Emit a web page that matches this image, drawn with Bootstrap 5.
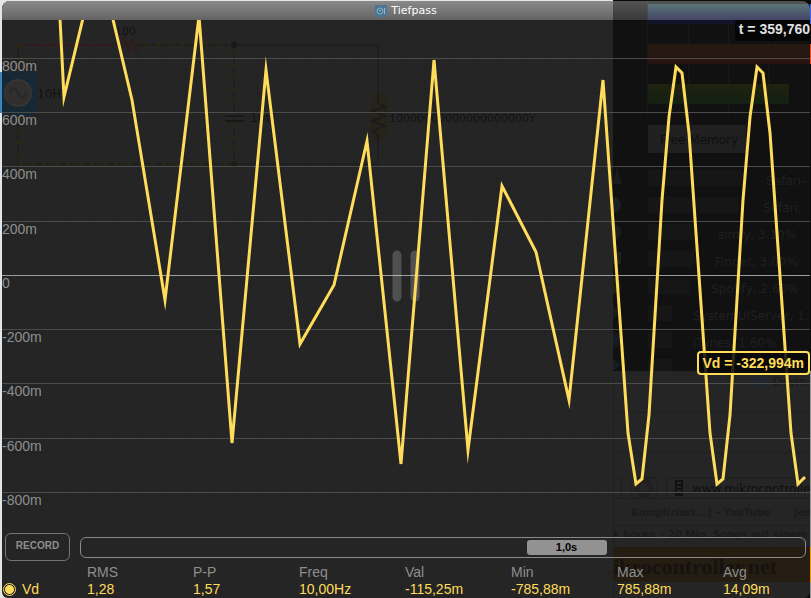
<!DOCTYPE html>
<html lang="de">
<head>
<meta charset="utf-8">
<meta name="viewport" content="width=device-width, initial-scale=1">
<title>Tiefpass</title>
<link href="https://cdn.jsdelivr.net/npm/bootstrap@5.3.0/dist/css/bootstrap.min.css" rel="stylesheet">
<style>
  :root { --trace: #ffdc5a; --muted: #8e8e8e; --line: #4b4b4b; }
  html, body { height: 100%; }
  body { background: #1c1c1c; font-family: "Liberation Sans", Arial, sans-serif; font-size: 14px; line-height: 17px; color: var(--muted); }
  .desktop { min-height: 100vh; padding: 1px 1px 0 2px; background: linear-gradient(#3a86bc, #3a86bc) 0 72px / 2px 41px no-repeat, linear-gradient(90deg, #e4e6e6 0 613px, #0a0a0a 613px); }
  .scope { background: #252525; border-radius: 8px 8px 6px 6px; }
  .backdrop { position: absolute; inset: 0; width: 100%; height: 100%; }
  .edge { position: absolute; top: 0; right: 0; width: 1px; height: 100%; }
  .titlebar { height: 19px; background: linear-gradient(rgba(255,255,255,.28), rgba(255,255,255,.17)); font: 11px/20px "DejaVu Sans", sans-serif; color: #fff; }
  .title-icon { width: 12px; height: 12px; }
  .plot { min-height: 200px; }
  .gridrows { display: grid; grid-template-rows: 35fr repeat(8, 50fr) 36fr; min-height: 100%; line-height: 14px; }
  .gridrows > div + div { border-top: 1px solid var(--line); }
  .gridrows > .zero { border-color: #9a9e9a !important; }
  .trace { position: absolute; inset: 0; width: 100%; height: 100%; }
  .pause { position: absolute; left: 50%; top: 50%; transform: translate(-50%, -50%); background: none; border: 0; padding: 0; line-height: 0; }
  .time-tag { position: absolute; top: 0; right: 0; background: #050505; color: #e0e0e0; border-radius: 4px 0 0 4px; padding: 1px 0 3px 4px; }
  .value-tag { position: absolute; top: 331px; right: 0; background: rgba(8,8,8,.85); color: var(--trace); border: 2px solid var(--trace); border-radius: 4px; padding: 2px 4px 1px 3px; }
  .controls { padding: 2px 4px 3px 3px; gap: 10px; }
  .record { width: 65px; height: 28px; border: 1px solid #747474; border-radius: 6px; background: none; color: var(--muted); font-size: 10px; font-weight: 700; line-height: 24px; padding: 0 0 2px; }
  .timebase { height: 21px; border: 1px solid #8a8a8a; border-radius: 6px; padding: 2px; }
  .timebase-thumb { margin-left: 61.6%; width: 80px; height: 15px; border: 0; border-radius: 3px; background: #929292; color: #000; font-size: 11px; font-weight: 700; line-height: 15px; }
  .readout { table-layout: fixed; }
  .readout th, .readout td { padding: 0; font-weight: 400; white-space: nowrap; }
  .readout td { color: var(--trace); }
  .c-name { width: 85px; }
  .c-val { width: 106px; }
  .channel { appearance: none; width: 13px; height: 13px; margin: 0 6px 0 1px; border: 1px solid var(--trace); border-radius: 50%; background: radial-gradient(circle, var(--trace) 0 4px, transparent 5px); }
</style>
<script src="https://cdn.jsdelivr.net/npm/bootstrap@5.3.0/dist/js/bootstrap.bundle.min.js"></script>
</head>
<body>
<div class="desktop d-flex position-relative">
  <svg class="edge" viewBox="0 0 1 598" preserveAspectRatio="none" aria-hidden="true">
    <path d="M0 4h1v20H0z" fill="#3868f0"/><path d="M0 44h1v20H0z" fill="#e84a10"/><path d="M0 371h1v227H0z" fill="#999"/><path d="M0 547h1v35H0z" fill="#f0a000"/>
  </svg>
  <main class="scope flex-grow-1 d-flex flex-column position-relative overflow-hidden">
    <svg class="backdrop" viewBox="2 1 808 597" preserveAspectRatio="xMinYMin slice" aria-hidden="true" font-family="DejaVu Sans, sans-serif" font-size="12">
      <defs>
        <pattern id="cells" width="24" height="24" patternUnits="userSpaceOnUse" x="17" y="20"><path d="M.5 0v24M0 .5h24" stroke="#222" fill="none"/></pattern>
        <linearGradient id="bar" x2="0" y2="1"><stop stop-color="#5c5c5c"/><stop offset="1" stop-color="#444"/></linearGradient>
        <linearGradient id="red" x2="0" y2="1"><stop stop-color="#251a12"/><stop offset="1" stop-color="#291311"/></linearGradient>
        <linearGradient id="green" x2="0" y2="1"><stop stop-color="#21220f"/><stop offset="1" stop-color="#122013"/></linearGradient>
        <linearGradient id="blue" x2="0" y2="1"><stop stop-color="#214349"/><stop offset="1" stop-color="#1e1e48"/></linearGradient>
      </defs>
      <path fill="url(#cells)" d="M2 20h611v578H2z"/>
      <path fill="url(#bar)" d="M2 1h611v19H2z"/>
      <g fill="none" stroke="#1f1f1f" stroke-width="2">
        <path d="M18 45v119h216V45H138M234 45h144v49M378 140v24H234" />
        <path d="M18 45h97l2-5 4 10 4-12 4 12 4-12 3 12 2-5" stroke="#301c1c"/>
        <path d="M18 45v119h216V45H138" stroke="#292910" stroke-width="3" stroke-dasharray="3 9"/>
        <path d="M225 116h19M225 121h19" stroke="#181818"/>
      </g>
      <rect x="371" y="93" width="16" height="48" rx="7" fill="#272319"/>
      <path d="M378 94v9l7 4-13 4 13 5-13 5 13 5-13 5 6 4v7" stroke="#1b1b1b" stroke-width="2" fill="none"/>
      <circle cx="234" cy="45" r="3" fill="#181818"/><circle cx="234" cy="164" r="3" fill="#1b1b1b"/>
      <rect x="0" y="71" width="37" height="45" rx="5" fill="#172733"/>
      <circle cx="18" cy="93" r="13" fill="#302f2d" stroke="#353535" stroke-width="2"/>
      <path d="M10 93q4-9 8 0t8 0" fill="none" stroke="#272727" stroke-width="2"/>
      <g fill="#131313">
        <text x="115" y="35" font-size="11">100</text><text x="37" y="98">10Hz</text><text x="250" y="122">1mF</text>
        <text x="389" y="122" font-size="11">10000000000000000000Y</text>
      </g>
      <path fill="#111" d="M613 1h198v370H613z"/>
      <path d="M647.500 1v115M688.500 1v115M728.500 1v115M768.500 1v115" stroke="#191919"/>
      <path fill="url(#blue)" d="M648 4h163v16H648z"/><path fill="#12142a" d="M648 20h163v4H648z"/><path fill="url(#red)" d="M648 44h163v20H648z"/>
      <rect x="648" y="84" width="141" height="20" rx="2" fill="url(#green)"/>
      <path d="M648 125h98v28H648z" fill="#202020"/>
      <text x="660" y="144" fill="#0f0f0f">Free Memory</text>
      <g fill="#161616"><path d="M648 170h95v16h-95zM648 197h90v16h-90zM648 224h46v16h-46zM648 251h46v16h-46zM648 278h42v16h-42zM648 305h24v16h-24zM648 332h24v16h-24zM648 359h24v12h-24z"/></g>
      <g fill="#202020">
        <text x="766" y="185">Safari–</text><text x="763" y="212">Safari,</text><text x="718" y="239">simfy, 3.10%</text><text x="715" y="266">Finder, 3.00%</text><text x="711" y="293">Spotify, 2.60%</text><text x="693" y="320">SystemUIServer, 1.</text><text x="693" y="347">iTunes, 1.60%</text>
      </g>
      <g><path d="M613 184l4-18 5 18z" fill="#1c1c1c"/><path d="M613 197a8 8 0 0 1 0 16z" fill="#1a2024"/><path d="M613 224a8 8 0 0 1 0 16z" fill="#1b1f1c"/><path d="M613 252h8v12h-8z" fill="#202020"/><path d="M613 278a8 8 0 0 1 0 16z" fill="#20220f"/><path d="M613 306l7 6-7 8z" fill="#1c1b17"/><path d="M613 332a8 8 0 0 1 0 16z" fill="#141c22"/><path d="M613 359l8 6-8 6z" fill="#151c22"/></g>
      <path d="M613.500 371v227M613 412.500h198M613 452.500h198M613 498.500h198M613 525.500h198" stroke="#1f1f1f" fill="none"/>
      <g fill="none" stroke="#202020" stroke-width="2"><rect x="631" y="478" width="26" height="20" rx="4"/><path d="M613 478h8v20h-8"/><path d="M811 478H667v20h144"/><circle cx="644" cy="488" r="7" stroke-width="5"/></g>
      <rect x="753" y="377" width="16" height="12" rx="2" fill="#20262b"/>
      <path fill="#121212" d="M675 480h8v16h-8z"/><path d="M677 483h4M677 487h4M677 491h4" stroke="#383838"/>
      <text x="773" y="386" fill="#191919">Down</text>
      <text x="692" y="493" fill="#101010">www.mikrocontroller</text>
      <g fill="#1b1b1b" font-size="10" font-weight="700"><text x="631" y="516">Kompliziert...] – YouTube</text><text x="794" y="516">Jen</text><text x="613" y="538">k hören – 20 Mio. Songs mit einem</text></g>
      <path fill="#251d12" d="M613 547h198v35H613z"/>
      <text x="613" y="574" font-family="Liberation Serif, serif" font-size="22" font-weight="700" fill="#151210">ikrocontroller.net</text>
    </svg>

    <header class="titlebar position-relative d-flex justify-content-center align-items-center gap-1">
      <svg class="title-icon" viewBox="0 0 12 12" aria-hidden="true"><rect width="12" height="12" rx="1" fill="#4a7796"/><circle cx="5" cy="6" r="3" fill="none" stroke="#8fadc2"/><path d="M4 6q1-2 2 0M9.500 3v6" fill="none" stroke="#9db8ca"/></svg>
      <span>Tiefpass</span>
    </header>

    <section class="plot flex-grow-1 position-relative d-grid" aria-label="Oszilloskop">
      <div class="gridrows">
        <div></div><div>800m</div><div>600m</div><div>400m</div><div>200m</div><div class="zero">0</div><div>-200m</div><div>-400m</div><div>-600m</div><div>-800m</div>
      </div>
      <button class="pause" type="button" aria-label="Pause"><svg width="28" height="54" viewBox="0 0 28 54"><path d="M5 6v42M23 6v42" stroke="#fff" stroke-opacity=".2" stroke-width="9" stroke-linecap="round"/></svg></button>
      <svg class="trace" viewBox="2 20 808 511" preserveAspectRatio="none" aria-hidden="true">
        <polyline fill="none" stroke="#ffdc5a" stroke-width="3" stroke-miterlimit="10" vector-effect="non-scaling-stroke" points="57,-40 64,97 98,-44 132,100 165,300 199,16 232,443 266,70 300,344 334,285 367,141 401,464 434,60 468,450 502,186 536,252 569,400 603,80 628,433 636,484 642,479 649,415 662,200 669,117 676,67 682,73 689,133 710,433 717,484 723,479 730,415 743,200 750,117 757,67 763,73 770,133 791,433 798,484 805,477"/>
      </svg>
      <output class="time-tag fw-bold">t = 359,760</output>
      <output class="value-tag fw-bold">Vd = -322,994m</output>
    </section>

    <section class="controls position-relative d-flex align-items-center">
      <button class="record flex-shrink-0" type="button">RECORD</button>
      <div class="timebase flex-grow-1"><button class="timebase-thumb p-0 d-block" type="button">1,0s</button></div>
    </section>

    <table class="readout position-relative w-100">
      <colgroup><col class="c-name"><col class="c-val" span="6"><col></colgroup>
      <thead><tr><th></th><th>RMS</th><th>P-P</th><th>Freq</th><th>Val</th><th>Min</th><th>Max</th><th>Avg</th></tr></thead>
      <tbody><tr><td><label class="d-flex align-items-center"><input class="channel" type="radio" name="channel" checked>Vd</label></td><td>1,28</td><td>1,57</td><td>10,00Hz</td><td>-115,25m</td><td>-785,88m</td><td>785,88m</td><td>14,09m</td></tr></tbody>
    </table>
  </main>
</div>
</body>
</html>
